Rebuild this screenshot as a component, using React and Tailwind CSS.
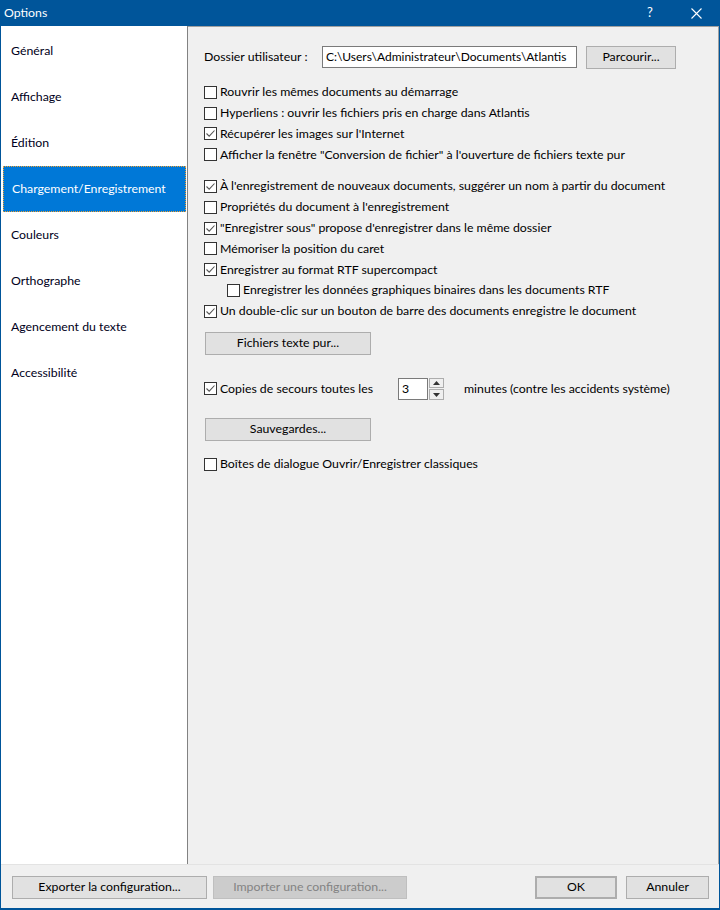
import React from 'react';

const sections = [
  'Général',
  'Affichage',
  'Édition',
  'Chargement/Enregistrement',
  'Couleurs',
  'Orthographe',
  'Agencement du texte',
  'Accessibilité',
];

function Check({ checked }) {
  return (
    <span className="w-[13px] h-[13px] shrink-0 border border-[#333333] bg-white flex items-center justify-center">
      {checked && (
        <svg width="11" height="11" viewBox="0 0 11 11">
          <path d="M1.5 5.5 L4.2 8.2 L9.5 2.5" fill="none" stroke="#555555" strokeWidth="1.1" />
        </svg>
      )}
    </span>
  );
}

function Row({ checked, children, indent }) {
  return (
    <div className={`h-[20.8px] flex items-center gap-[3px] ${indent ? 'pl-[23px]' : ''}`}>
      <Check checked={checked} />
      <span className="whitespace-nowrap">{children}</span>
    </div>
  );
}

function Btn({ children, className = '' }) {
  return (
    <div
      className={`h-[23px] flex items-center justify-center bg-[#e1e1e1] border border-[#adadad] text-black ${className}`}
    >
      {children}
    </div>
  );
}

export default function App() {
  return (
    <div
      className="w-[720px] h-[910px] bg-[#00559a] flex flex-col px-[1px] pb-[2px] text-[12.3px] text-black"
      style={{ fontFamily: 'Lato, "Noto Sans", sans-serif' }}
    >
      {/* Title bar */}
      <div className="h-[26px] shrink-0 flex items-center text-white pl-[3px]">
        <span className="flex-1">Options</span>
        <span className="w-[46px] text-center text-[13px]">?</span>
        <span className="w-[46px] flex items-center justify-center">
          <svg width="11" height="11" viewBox="0 0 11 11">
            <path d="M0.5 0.5 L10.5 10.5 M10.5 0.5 L0.5 10.5" stroke="white" strokeWidth="1.1" />
          </svg>
        </span>
      </div>

      <div className="flex-1 bg-[#f0f0f0] flex flex-col">
        <div className="h-[839px] flex border-b border-[#e3e3e3]">
          {/* Sidebar */}
          <div className="w-[187px] shrink-0 bg-white border-r border-[#828282] pt-[2px]">
            {sections.map((s, i) =>
              i === 3 ? (
                <div
                  key={s}
                  className="h-[46px] ml-[2px] mr-[1px] flex items-center pl-[8px] bg-[#0078d7] text-white border border-dotted border-[#f0a030]"
                >
                  {s}
                </div>
              ) : (
                <div key={s} className="h-[46px] flex items-center pl-[10px] text-[#000020]">
                  {s}
                </div>
              )
            )}
          </div>

          {/* Content */}
          <div className="flex-1 border-t border-r border-[#a0a0a0] pl-[16px] pt-[18px]">
            <div className="flex items-center h-[24px]">
              <span className="w-[118px]">Dossier utilisateur :</span>
              <div className="w-[255px] h-[22px] bg-white border border-[#7a7a7a] flex items-center pl-[3px] whitespace-nowrap overflow-hidden text-[12px]">
                C:\Users\Administrateur\Documents\Atlantis
              </div>
              <Btn className="ml-[9px] w-[90px]">Parcourir...</Btn>
            </div>

            <div className="mt-[13px]">
              <Row>Rouvrir les mêmes documents au démarrage</Row>
              <Row>Hyperliens : ouvrir les fichiers pris en charge dans Atlantis</Row>
              <Row checked>Récupérer les images sur l'Internet</Row>
              <Row>Afficher la fenêtre "Conversion de fichier" à l'ouverture de fichiers texte pur</Row>
            </div>

            <div className="mt-[11px]">
              <Row checked>À l'enregistrement de nouveaux documents, suggérer un nom à partir du document</Row>
              <Row>Propriétés du document à l'enregistrement</Row>
              <Row checked>"Enregistrer sous" propose d'enregistrer dans le même dossier</Row>
              <Row>Mémoriser la position du caret</Row>
              <Row checked>Enregistrer au format RTF supercompact</Row>
              <Row indent>Enregistrer les données graphiques binaires dans les documents RTF</Row>
              <Row checked>Un double-clic sur un bouton de barre des documents enregistre le document</Row>
            </div>

            <Btn className="mt-[10px] ml-[1px] w-[166px]">Fichiers texte pur...</Btn>

            <div className="mt-[23px] flex items-center h-[22px]">
              <div className="w-[194px] flex items-center gap-[3px]">
                <Check checked />
                <span className="whitespace-nowrap">Copies de secours toutes les</span>
              </div>
              <div className="w-[30px] h-[22px] bg-white border border-[#7a7a7a] flex items-center pl-[3px]">3</div>
              <div className="ml-[1px] w-[15px] h-[22px] flex flex-col gap-[1px]">
                <div className="flex-1 bg-[#f0f0f0] border border-[#adadad] flex items-center justify-center">
                  <svg width="7" height="4" viewBox="0 0 7 4"><path d="M0 4 L3.5 0 L7 4 Z" fill="#333" /></svg>
                </div>
                <div className="flex-1 bg-[#f0f0f0] border border-[#adadad] flex items-center justify-center">
                  <svg width="7" height="4" viewBox="0 0 7 4"><path d="M0 0 L3.5 4 L7 0 Z" fill="#333" /></svg>
                </div>
              </div>
              <span className="ml-[20px] whitespace-nowrap">minutes (contre les accidents système)</span>
            </div>

            <Btn className="mt-[18px] ml-[1px] w-[166px]">Sauvegardes...</Btn>

            <div className="mt-[13px]">
              <Row>Boîtes de dialogue Ouvrir/Enregistrer classiques</Row>
            </div>
          </div>
        </div>

        {/* Bottom buttons */}
        <div className="flex items-center pt-[11px] pl-[11px] pr-[10px]">
          <Btn className="w-[195px]">Exporter la configuration...</Btn>
          <div className="ml-[6px] w-[194px] h-[23px] flex items-center justify-center bg-[#cccccc] border border-[#bfbfbf] text-[#838383]">
            Importer une configuration...
          </div>
          <div className="flex-1" />
          <Btn className="w-[82px] border-2 border-[#0078d7]">OK</Btn>
          <Btn className="ml-[9px] w-[83px]">Annuler</Btn>
        </div>
      </div>
    </div>
  );
}
